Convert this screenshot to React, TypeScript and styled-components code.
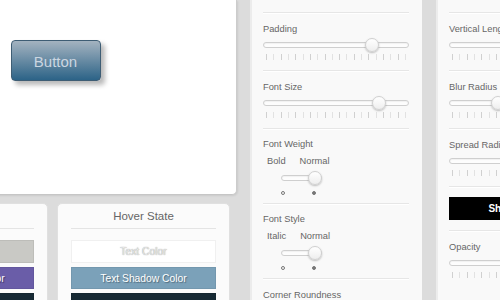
import styled, { createGlobalStyle } from 'styled-components'

const GlobalStyle = createGlobalStyle`
  html, body {
    margin: 0;
    padding: 0;
    background: #dcdcdc;
    overflow: hidden;
  }
  body {
    font-family: 'Liberation Sans', Arial, sans-serif;
  }
`

const Viewport = styled.div`
  width: 500px;
  height: 300px;
  overflow: hidden;
`

const Page = styled.div`
  display: flex;
  margin-left: -125px;
  height: 300px;
`

const LeftColumn = styled.div`
  width: 362px;
  flex-shrink: 0;
  display: flex;
  flex-direction: column;
`

const Preview = styled.div`
  height: 195px;
  flex-shrink: 0;
  box-sizing: border-box;
  background: #ffffff;
  border-right: 1px solid #cccccc;
  border-bottom: 1px solid #c6c6c6;
  border-radius: 0 0 5px 0;
  box-shadow: 1px 1px 2px rgba(0, 0, 0, 0.08);
  display: flex;
  justify-content: center;
  align-items: flex-start;
  padding-top: 40px;
`

const DemoButton = styled.div`
  width: 90px;
  height: 41px;
  box-sizing: border-box;
  border: 1px solid #3e5d74;
  border-radius: 4px;
  background: linear-gradient(#a4b3c0, #2c6387);
  box-shadow: 4px 4px 5px rgba(0, 0, 0, 0.28);
  color: #cbd6e1;
  font-size: 15px;
  display: flex;
  align-items: center;
  justify-content: center;
  padding-top: 2px;
`

const CardRow = styled.div`
  display: flex;
  gap: 9px;
  margin-top: 8px;
  padding-right: 7px;
  flex-shrink: 0;
`

const Card = styled.div`
  width: 173px;
  flex-shrink: 0;
  box-sizing: border-box;
  height: 110px;
  background: #fbfbfb;
  border: 1px solid #e0e0e0;
  border-radius: 5px 5px 0 0;
  padding: 0 13px;
`

const CardTitle = styled.div`
  height: 24px;
  line-height: 24px;
  text-align: center;
  font-size: 11.5px;
  color: #666;
  border-bottom: 1px solid #e4e4e4;
  margin-bottom: 11px;
`

const ColorBox = styled.div<{ $bg: string; $fg: string; $shadow: string; $h: number }>`
  height: ${(p) => p.$h}px;
  box-sizing: border-box;
  margin-bottom: 4px;
  background: ${(p) => p.$bg};
  color: ${(p) => p.$fg};
  text-shadow: ${(p) => p.$shadow};
  border: 1px solid rgba(0, 0, 0, 0.06);
  font-size: 10.3px;
  display: flex;
  align-items: center;
  justify-content: center;
  white-space: nowrap;
`

const Gap = styled.div<{ $w: number }>`
  width: ${(p) => p.$w}px;
  flex-shrink: 0;
`

const Column = styled.div<{ $pad: number }>`
  width: 172px;
  flex-shrink: 0;
  box-sizing: border-box;
  background: #f9f9f9;
  border-left: 2px solid #ececec;
  padding: 12px 13px 0 ${(p) => p.$pad}px;
`

const Section = styled.div`
  border-top: 1px solid #e6e6e6;
  box-shadow: inset 0 1px 0 #ffffff;
  padding: 10px 0 10px;
`

const Label = styled.div`
  font-size: 9.3px;
  line-height: 12px;
  color: #666;
  white-space: nowrap;
`

const Track = styled.div<{ $w: number }>`
  position: relative;
  width: ${(p) => p.$w}px;
  height: 6px;
  box-sizing: border-box;
  border: 1px solid #cfcfcf;
  border-radius: 4px;
  background: #fdfdfd;
  box-shadow: inset 0 1px 1px rgba(0, 0, 0, 0.05);
`

const SliderTrack = styled(Track)`
  margin-top: 7px;
`

const Thumb = styled.div<{ $pos: number }>`
  position: absolute;
  top: 50%;
  left: ${(p) => p.$pos}%;
  width: 14px;
  height: 14px;
  box-sizing: border-box;
  margin: -7px 0 0 -7px;
  border-radius: 50%;
  border: 1px solid #d0d0d0;
  background: linear-gradient(#ffffff, #eeeeee);
  box-shadow: 0 1px 2px rgba(0, 0, 0, 0.25);
`

const Ticks = styled.div`
  display: flex;
  justify-content: space-between;
  padding: 0 3px;
  margin-top: 6px;
  height: 6px;
  width: 146px;
  box-sizing: border-box;
`

const Tick = styled.span<{ $light: boolean }>`
  width: 1px;
  height: 6px;
  background: ${(p) => (p.$light ? '#e2e2e2' : '#d0d0d0')};
`

const Options = styled.div`
  display: flex;
  gap: 14px;
  padding-left: 4px;
  margin-top: 5px;
  font-size: 9.3px;
  line-height: 12px;
  color: #666;
`

const ToggleWrap = styled.div`
  margin: 3px 0 0 18px;
  height: 15px;
  display: flex;
  align-items: center;
`

const Dots = styled.div`
  display: flex;
  gap: 27px;
  margin: 6px 0 0 18px;
  padding-bottom: 1px;
`

const Dot = styled.span<{ $filled: boolean }>`
  width: 4px;
  height: 4px;
  box-sizing: border-box;
  border-radius: 50%;
  border: 1px solid #777;
  background: ${(p) => (p.$filled ? '#777' : 'transparent')};
`

const DarkButton = styled.div`
  width: 146px;
  height: 23px;
  background: #000;
  color: #fff;
  font-weight: bold;
  font-size: 10px;
  display: flex;
  align-items: center;
  justify-content: center;
  white-space: nowrap;
`

const Slider = ({ label, pos }: { label: string; pos: number }) => (
  <Section>
    <Label>{label}</Label>
    <SliderTrack $w={146}>
      <Thumb $pos={pos} />
    </SliderTrack>
    <Ticks>
      {Array.from({ length: 20 }).map((_, i) => (
        <Tick key={i} $light={i % 2 === 1} />
      ))}
    </Ticks>
  </Section>
)

const Toggle = ({ label, off }: { label: string; off: string }) => (
  <Section style={{ paddingTop: 9, paddingBottom: 7 }}>
    <Label>{label}</Label>
    <Options>
      <span>{off}</span>
      <span>Normal</span>
    </Options>
    <ToggleWrap>
      <Track $w={41}>
        <Thumb $pos={84} />
      </Track>
    </ToggleWrap>
    <Dots>
      <Dot $filled={false} />
      <Dot $filled />
    </Dots>
  </Section>
)

export default function App() {
  return (
    <Viewport>
      <GlobalStyle />
      <Page>
        <LeftColumn>
          <Preview>
            <DemoButton>Button</DemoButton>
          </Preview>
          <CardRow>
            <Card>
              <CardTitle>Normal State</CardTitle>
              <ColorBox $h={23} $bg="#c9c9c5" $fg="#e9e9e9" $shadow="0 0 1px #888">Text Color</ColorBox>
              <ColorBox $h={22} $bg="#6a5da8" $fg="#ffffff" $shadow="1px 1px 1px rgba(0,0,0,0.4)">Text Shadow Color</ColorBox>
              <ColorBox $h={22} $bg="#172a35" $fg="#ffffff" $shadow="none">Background Color</ColorBox>
            </Card>
            <Card>
              <CardTitle>Hover State</CardTitle>
              <ColorBox $h={23} $bg="#ffffff" $fg="#e8e8e8" $shadow="0 0 1px #7a7a7a">Text Color</ColorBox>
              <ColorBox $h={22} $bg="#7ba1b9" $fg="#ffffff" $shadow="1px 1px 1px rgba(0,0,0,0.35)">Text Shadow Color</ColorBox>
              <ColorBox $h={22} $bg="#172a34" $fg="#ffffff" $shadow="none">Background Color</ColorBox>
            </Card>
          </CardRow>
        </LeftColumn>
        <Gap $w={13} />
        <Column $pad={11}>
          <Slider label="Padding" pos={75} />
          <Slider label="Font Size" pos={80} />
          <Toggle label="Font Weight" off="Bold" />
          <Toggle label="Font Style" off="Italic" />
          <Section>
            <Label>Corner Roundness</Label>
          </Section>
        </Column>
        <Gap $w={14} />
        <Column $pad={11}>
          <Slider label="Vertical Length" pos={50} />
          <Slider label="Blur Radius" pos={33} />
          <Slider label="Spread Radius" pos={45} />
          <Section>
            <DarkButton>Shadow Color</DarkButton>
          </Section>
          <Slider label="Opacity" pos={100} />
        </Column>
      </Page>
    </Viewport>
  )
}
